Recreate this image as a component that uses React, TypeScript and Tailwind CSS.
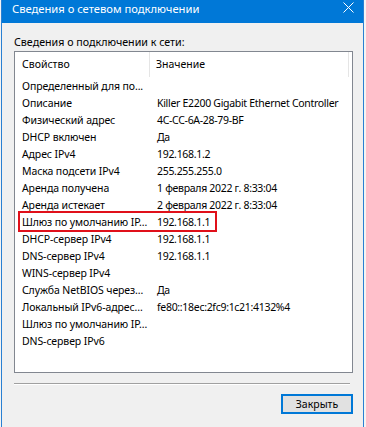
const rows: [string, string][] = [
  ["Определенный для по...", ""],
  ["Описание", "Killer E2200 Gigabit Ethernet Controller"],
  ["Физический адрес", "4C-CC-6A-28-79-BF"],
  ["DHCP включен", "Да"],
  ["Адрес IPv4", "192.168.1.2"],
  ["Маска подсети IPv4", "255.255.255.0"],
  ["Аренда получена", "1 февраля 2022 г. 8:33:04"],
  ["Аренда истекает", "2 февраля 2022 г. 8:33:04"],
  ["Шлюз по умолчанию IP...", "192.168.1.1"],
  ["DHCP-сервер IPv4", "192.168.1.1"],
  ["DNS-сервер IPv4", "192.168.1.1"],
  ["WINS-сервер IPv4", ""],
  ["Служба NetBIOS через...", "Да"],
  ["Локальный IPv6-адрес...", "fe80::18ec:2fc9:1c21:4132%4"],
  ["Шлюз по умолчанию IP...", ""],
  ["DNS-сервер IPv6", ""],
];

export default function App() {
  return (
    <div className="relative w-[366px] h-[427px] overflow-hidden bg-[#f4f4f4] font-['Noto_Sans',sans-serif] text-black">
      <div className="ml-[1px] w-[363px] h-full flex flex-col border-x border-[#2a80d2] bg-[#f0f0f0]">
        {/* title bar */}
        <div className="h-[23px] bg-[#0078d7] flex items-start justify-between text-white">
          <span className="ml-[10px] mt-[1px] text-[11.2px] leading-[16px]">
            Сведения о сетевом подключении
          </span>
          <svg width="11" height="11" viewBox="0 0 11 11" className="mt-[2px] mr-[9px]">
            <path d="M0.5 0.5 L10.5 10.5 M10.5 0.5 L0.5 10.5" stroke="white" strokeWidth="1" />
          </svg>
        </div>

        <div className="flex flex-col pl-[12px]">
          <div className="mt-[11px] text-[10.7px] leading-[16px]">
            Сведения о подключении к сети:
          </div>

          {/* list view */}
          <div className="mt-[1px] w-[339px] h-[322px] border border-[#828790] bg-white text-[10.5px]">
            <div className="h-[25px] flex items-stretch">
              <div className="w-[135px] pl-[7px] flex items-center border-r border-[#e5e5e5]">
                Свойство
              </div>
              <div className="w-[199px] pl-[6px] flex items-center border-r border-[#e5e5e5]">
                Значение
              </div>
            </div>
            <div className="mt-[1px] flex flex-col">
              {rows.map(([k, v], i) => (
                <div key={i} className="h-[17px] flex items-center whitespace-nowrap">
                  <div className="w-[136px] pl-[7px] tracking-[-0.1px]">{k}</div>
                  <div className="pl-[6px] tracking-[-0.3px]">{v}</div>
                </div>
              ))}
            </div>
          </div>

          {/* separator */}
          <div className="mt-[10px] w-[336px] h-[2px] border-t border-[#a0a0a0] border-b border-b-white" />

          <div className="w-[339px] mt-[9px] flex justify-end">
            <button className="w-[72px] h-[20px] border-2 border-[#0078d7] bg-[#e1e1e1] text-[10.5px] leading-none flex items-center justify-center">
              Закрыть
            </button>
          </div>
        </div>
      </div>

      {/* highlight annotation */}
      <div className="absolute left-[18px] top-[211px] w-[199px] h-[21px] border-2 border-[#e0101a]" />
    </div>
  );
}
